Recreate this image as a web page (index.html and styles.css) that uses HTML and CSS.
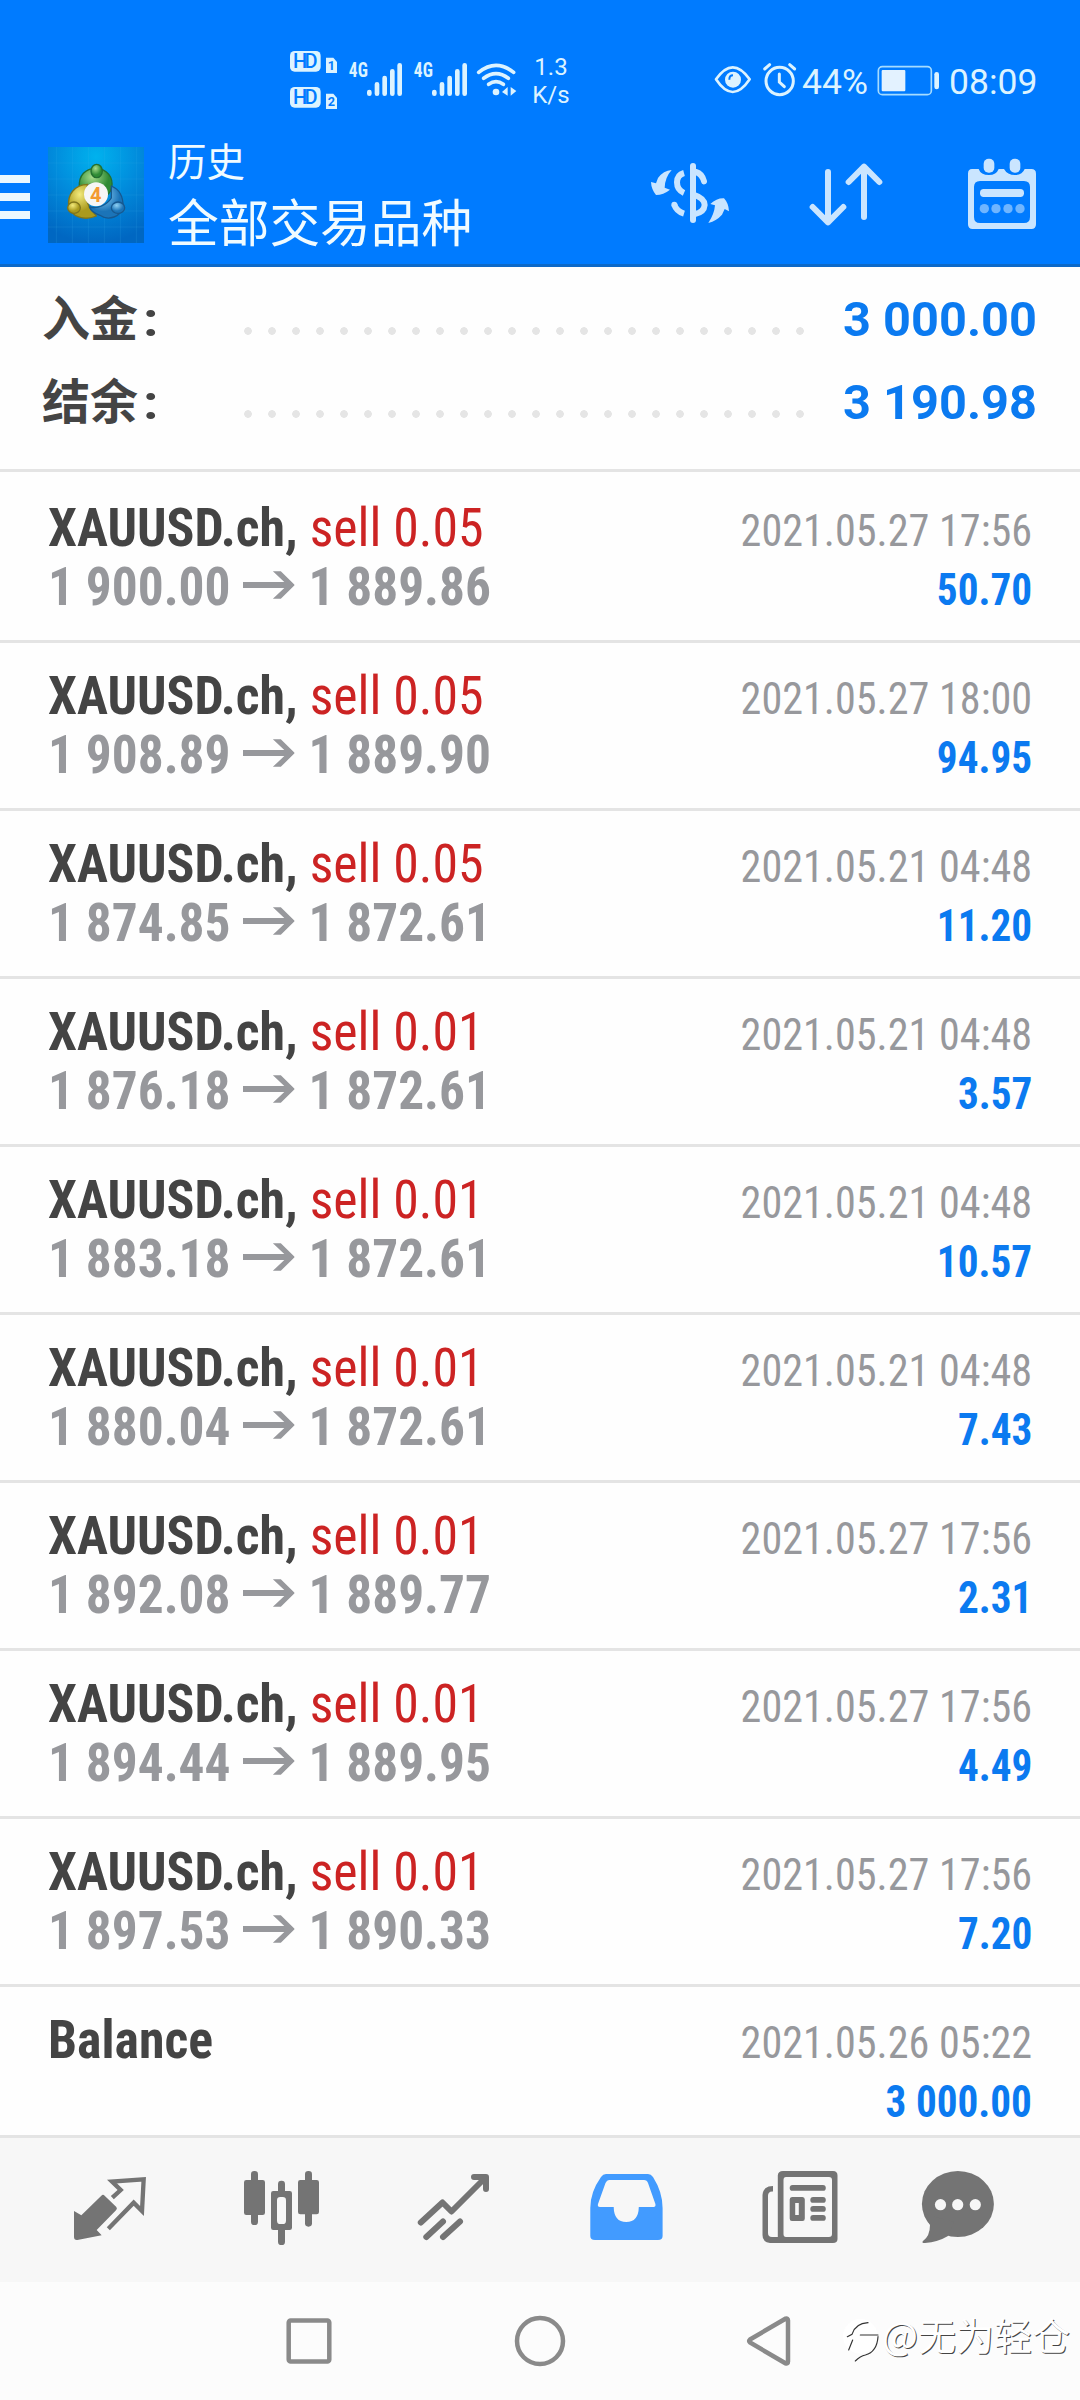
FILE: index.html
```
<!DOCTYPE html>
<html lang="zh-CN">
<head>
<meta charset="utf-8">
<title>历史</title>
<link rel="stylesheet" href="styles.css">
</head>
<body>
<svg class="defs" width="0" height="0"><symbol id="arrow" viewBox="0 0 52 28" preserveAspectRatio="none"><path d="M0 11H41.5L30 0.3H38L52 14L38 27.8H30L41.5 17H0Z" fill="#97989c"/></symbol></svg>
<header class="header">
  <div class="status">
    <svg class="network" width="260" height="90" viewBox="0 0 780 270" fill="#dcf3ff">
      <rect x="60" y="63" width="92" height="62" rx="14"/><rect x="60" y="171" width="92" height="62" rx="14"/>
      <text x="106" y="113" class="hd" textLength="74">HD</text><text x="106" y="221" class="hd" textLength="74">HD</text>
      <path d="M168 83H190L201 96V129H168Z"/><path d="M168 191H190L201 204V237H168Z"/>
      <text x="184" y="121" class="sim">1</text><text x="184" y="229" class="sim">2</text>
      <text x="265" y="142" class="gen" textLength="57" lengthAdjust="spacingAndGlyphs">4G</text><text x="460" y="142" class="gen" textLength="57" lengthAdjust="spacingAndGlyphs">4G</text>
      <g id="bars" stroke="#dcf3ff" stroke-width="14" stroke-linecap="round"><path d="M298 186V191M321 163V191M344 144V191M367 124V191M389 106V191"/></g>
      <use href="#bars" x="195"/>
      <g fill="none" stroke="#dcf3ff" stroke-width="11" stroke-linecap="round"><path d="M626 127Q678 85 731 127M641 145Q678 117 715 145M656 163Q678 147 700 163"/></g>
      <circle cx="678" cy="186" r="10"/><path d="M696 186L713 171V197ZM722 171L739 183L722 197Z"/>
    </svg>
    <div class="speed">1.3<br>K/s</div>
    <svg class="alarm" width="100" height="80" viewBox="0 0 300 240" fill="none" stroke="#dcf3ff">
      <path d="M48 118Q98 46 149 118Q98 194 48 118Z" stroke-width="8" stroke-linejoin="round"/>
      <circle cx="99" cy="119" r="24" fill="#dcf3ff" stroke="none"/><path d="M88 119Q88 106 99 106" stroke="#007bff" stroke-width="6"/>
      <circle cx="239" cy="123" r="41" stroke-width="9"/><path d="M238 102V126L253 140" stroke-width="9" stroke-linecap="round"/>
      <path d="M194 87L209 74M284 87L269 74" stroke-width="9" stroke-linecap="round"/>
    </svg>
    <span class="percent">44%</span>
    <svg class="battery" width="64" height="32" viewBox="0 0 192 96"><rect x="4" y="8" width="159" height="84" rx="12" fill="none" stroke="#a5dcff" stroke-width="5"/><rect x="14" y="18" width="71" height="64" rx="3" fill="#e3f2ff"/><rect x="172" y="24" width="14" height="52" rx="7" fill="#dcf3ff"/></svg>
    <span class="time">08:09</span>
  </div>
  <div class="appbar">
    <div class="menu"><i></i><i></i><i></i></div>
    <svg class="logo" width="96" height="96" viewBox="24 21 288 288">
      <defs>
        <radialGradient id="sky" cx=".5" cy=".1" r=".9"><stop offset="0" stop-color="#00b2ee"/><stop offset=".5" stop-color="#018bdc"/><stop offset="1" stop-color="#0067c2"/></radialGradient>
        <radialGradient id="g" cx=".4" cy=".3"><stop offset="0" stop-color="#a8dc8c"/><stop offset="1" stop-color="#2f8b35"/></radialGradient>
        <radialGradient id="y" cx=".4" cy=".3"><stop offset="0" stop-color="#f3ea7c"/><stop offset="1" stop-color="#aa9a1d"/></radialGradient>
        <radialGradient id="b" cx=".4" cy=".3"><stop offset="0" stop-color="#8fd0f3"/><stop offset="1" stop-color="#1b74b8"/></radialGradient>
      </defs>
      <path d="M24 21H312V309H24Z" fill="url(#sky)"/>
      <path d="M24 69H312M24 117H312M24 165H312M24 213H312M24 261H312M49 21V309M97 21V309M145 21V309M193 21V309M241 21V309M289 21V309" stroke="#3bb0ee" stroke-opacity=".25" stroke-width="2"/>
      <g stroke-width="4" stroke-linejoin="round">
        <path d="M118 143C115 105 137 85 168 85C202 87 221 112 215 143C211 160 200 168 190 172L160 130L140 136Z" fill="url(#g)" stroke="#246f30"/>
        <path d="M143 133C104 134 82 163 86 199C94 229 130 244 169 228L148 202L136 170Z" fill="url(#y)" stroke="#80751b"/>
        <path d="M214 138C238 148 250 170 249 200C244 230 205 244 180 226C163 220 151 210 149 201C173 207 200 196 214 174Z" fill="url(#b)" stroke="#17588f"/>
        <ellipse cx="170" cy="93" rx="17" ry="20" fill="url(#g)" stroke="#246f30"/><ellipse cx="102" cy="203" rx="19" ry="17" fill="url(#y)" stroke="#80751b"/><ellipse cx="234" cy="203" rx="20" ry="17" fill="url(#b)" stroke="#17588f"/>
      </g>
      <circle cx="168" cy="163" r="36" fill="#f6f6f6"/><text x="167" y="185" class="four">4</text>
    </svg>
    <div class="titles"><div class="sub">历史</div><div class="main">全部交易品种</div></div>
    <svg class="symbols" width="120" height="90" viewBox="0 0 360 270" fill="#cae5ff">
      <path d="M95 60Q70 62 54 84L48 100L33 96Q34 118 48 135Q70 135 90 119L74 113Q75 82 95 60Z"/>
      <path d="M205 219Q230 212 246 194L254 177L267 184Q266 160 252 145Q230 144 211 162L225 166Q223 192 205 219Z"/>
      <rect x="150" y="39" width="18" height="180" rx="9"/>
      <g fill="none" stroke="#cae5ff" stroke-width="18"><path d="M132 69Q111 75 111 97Q111 120 132 129M132 191Q109 184 103 164"/><path d="M168 66Q186 71 192 94" stroke-linecap="round"/><path d="M160 134Q194 145 194 165Q192 187 165 192"/></g><circle cx="103" cy="164" r="9"/>
    </svg>
    <svg class="sort" width="90" height="80" viewBox="0 0 270 240" fill="none" stroke="#cae5ff" stroke-width="18" stroke-linecap="round" stroke-linejoin="round"><path d="M84 36V187M38 141L84 187L130 141M192 171V20M146 66L192 20L238 66"/></svg>
    <svg class="calendar" width="80" height="80" viewBox="0 0 240 240" fill="#cae5ff">
      <path fill-rule="evenodd" d="M36 42H56Q62 60 87 60Q109 60 116 42H132Q142 60 165 60Q187 60 194 42H214Q228 42 228 56V208Q228 222 214 222H38Q24 222 24 208V56Q24 42 36 42ZM60 78Q42 78 42 96V186Q42 204 60 204H192Q210 204 210 186V96Q210 78 192 78Z"/>
      <rect x="71" y="11" width="32" height="42" rx="15"/><rect x="149" y="11" width="32" height="42" rx="15"/><rect x="60" y="102" width="132" height="24" rx="11"/>
      <g opacity=".55"><circle cx="73" cy="161" r="14"/><circle cx="108" cy="161" r="14"/><circle cx="144" cy="161" r="14"/><circle cx="180" cy="161" r="14"/></g>
    </svg>
  </div>
</header>
<section class="summary">
  <div class="sumrow"><span class="label">入金<span class="colon">:</span></span><span class="dots"></span><span class="sum">3 000.00</span></div>
  <div class="sumrow"><span class="label">结余<span class="colon">:</span></span><span class="dots"></span><span class="sum">3 190.98</span></div>
</section>
<main class="list">
  <article class="deal"><div class="line"><span class="name">XAUUSD.ch, <em>sell 0.05</em></span><time class="date">2021.05.27 17:56</time></div><div class="line"><span class="prices">1 900.00<svg class="to"><use href="#arrow"/></svg>1 889.86</span><b class="profit">50.70</b></div></article>
  <article class="deal"><div class="line"><span class="name">XAUUSD.ch, <em>sell 0.05</em></span><time class="date">2021.05.27 18:00</time></div><div class="line"><span class="prices">1 908.89<svg class="to"><use href="#arrow"/></svg>1 889.90</span><b class="profit">94.95</b></div></article>
  <article class="deal"><div class="line"><span class="name">XAUUSD.ch, <em>sell 0.05</em></span><time class="date">2021.05.21 04:48</time></div><div class="line"><span class="prices">1 874.85<svg class="to"><use href="#arrow"/></svg>1 872.61</span><b class="profit">11.20</b></div></article>
  <article class="deal"><div class="line"><span class="name">XAUUSD.ch, <em>sell 0.01</em></span><time class="date">2021.05.21 04:48</time></div><div class="line"><span class="prices">1 876.18<svg class="to"><use href="#arrow"/></svg>1 872.61</span><b class="profit">3.57</b></div></article>
  <article class="deal"><div class="line"><span class="name">XAUUSD.ch, <em>sell 0.01</em></span><time class="date">2021.05.21 04:48</time></div><div class="line"><span class="prices">1 883.18<svg class="to"><use href="#arrow"/></svg>1 872.61</span><b class="profit">10.57</b></div></article>
  <article class="deal"><div class="line"><span class="name">XAUUSD.ch, <em>sell 0.01</em></span><time class="date">2021.05.21 04:48</time></div><div class="line"><span class="prices">1 880.04<svg class="to"><use href="#arrow"/></svg>1 872.61</span><b class="profit">7.43</b></div></article>
  <article class="deal"><div class="line"><span class="name">XAUUSD.ch, <em>sell 0.01</em></span><time class="date">2021.05.27 17:56</time></div><div class="line"><span class="prices">1 892.08<svg class="to"><use href="#arrow"/></svg>1 889.77</span><b class="profit">2.31</b></div></article>
  <article class="deal"><div class="line"><span class="name">XAUUSD.ch, <em>sell 0.01</em></span><time class="date">2021.05.27 17:56</time></div><div class="line"><span class="prices">1 894.44<svg class="to"><use href="#arrow"/></svg>1 889.95</span><b class="profit">4.49</b></div></article>
  <article class="deal"><div class="line"><span class="name">XAUUSD.ch, <em>sell 0.01</em></span><time class="date">2021.05.27 17:56</time></div><div class="line"><span class="prices">1 897.53<svg class="to"><use href="#arrow"/></svg>1 890.33</span><b class="profit">7.20</b></div></article>
  <article class="deal last"><div class="line"><span class="name">Balance</span><time class="date">2021.05.26 05:22</time></div><div class="line single"><b class="profit">3 000.00</b></div></article>
</main>
<nav class="tabs">
  <svg viewBox="-30 0 360 300" fill="#747474"><path d="M42 153L64 166L124 107Q129 102 134 107L169 141Q173 146 168 151L110 210L125 226L52 240Q42 241 42 231Z"/><path d="M157 113L182 90L156 65L251 58L246 153L221 128L145 206" fill="none" stroke="#747474" stroke-width="13"/></svg>
  <svg viewBox="486 0 360 300" fill="#747474"><rect x="552" y="60" width="63" height="105" rx="7"/><rect x="573" y="33" width="21" height="162" rx="10"/><rect x="714" y="60" width="63" height="103" rx="7"/><rect x="735" y="33" width="21" height="167" rx="10"/><rect x="654" y="62" width="21" height="193" rx="10"/><rect x="633" y="93" width="63" height="117" rx="7"/><rect x="651" y="111" width="27" height="81" rx="10" fill="#f7f7f7"/></svg>
  <svg viewBox="0 0 120 100" fill="none" stroke="#747474" stroke-width="6" stroke-linecap="round" stroke-linejoin="round"><path d="M26.800 62.500L48.500 42.500L57.500 51.500L91 18M80 17H92V29M32.300 77L49 61.500M49 77L66 61.500"/></svg>
  <svg viewBox="0 0 120 100" fill="#429bff"><path fill-rule="evenodd" d="M40 14H82Q85 14 87 17Q96.600 32 96.600 48V76Q96.600 80 92 80H29Q24.300 80 24.300 76V48Q24.300 32 35 17Q37 14 40 14ZM43 20Q41 20 39.500 23L32 44Q31.200 47 34 47H47.700Q48 62 60.200 62Q72.500 62 72.800 47H87.500Q90 47 89.400 44L82 23Q81 20 78 20Z"/></svg>
  <svg viewBox="0 0 120 100" fill="#747474"><path fill-rule="evenodd" d="M45 11H95Q99.500 11 99.500 15.500V79Q99.500 83 95 83H32Q24.500 82 24.500 75V35Q25 26 35 26V31.500Q30 31 30 36V73Q30 77 34 77H39.800V15.500Q40 11 45 11ZM48 17Q45.500 17 45.500 20V74Q45.500 77 48 77H91Q94 77 94 74V20Q94 17 91 17Z"/><rect x="51.700" y="25" width="36.100" height="5.800" rx="2.900"/><path fill-rule="evenodd" d="M54 37H64.500Q66.800 37 66.800 39.500V58.500Q66.800 61 64.500 61H54Q51.700 61 51.700 58.500V39.500Q51.700 37 54 37ZM57.200 43V55H60.800V43Z"/><rect x="72.300" y="37" width="15.500" height="5.800" rx="2.900"/><rect x="72.300" y="46" width="15.500" height="5.800" rx="2.900"/><rect x="72.300" y="55" width="15.500" height="5.800" rx="2.900"/></svg>
  <svg viewBox="0 0 120 100" fill="#747474"><ellipse cx="47.900" cy="44" rx="36" ry="33"/><path d="M14 54Q18 60 20 65Q20 76 13 81Q11 83 15 83Q28 82 38 76L44 62Z"/><g fill="#f7f7f7"><circle cx="30.500" cy="44.700" r="5.600"/><circle cx="47.700" cy="44.700" r="5.600"/><circle cx="65.300" cy="44.700" r="5.600"/></g></svg>
</nav>
<footer class="sysnav">
  <svg width="60" height="60" viewBox="0 0 60 60"><rect x="9.700" y="9.500" width="40.600" height="41" rx="2"/></svg>
  <svg width="60" height="60" viewBox="0 0 60 60"><circle cx="31" cy="30" r="23"/></svg>
  <svg width="60" height="60" viewBox="0 0 60 60"><path d="M11 28.500L46.500 7.700Q49 7 49 9.500V50.500Q49 53 46.500 52.300L11 31.500Q9.500 30 11 28.500Z"/></svg>
  <div class="mark">
    <svg width="40" height="50" viewBox="20 20 120 150" fill="none" stroke-linecap="round"><circle cx="75" cy="84" r="52" fill="#fff"/><path d="M36 85L50 78Q60 45 98 43M52 95L40 125M75 80H128M128 85Q125 130 90 140Q75 143 60 158" stroke="#333" stroke-width="3.500"/></svg>
    <span>@无为轻仓</span>
  </div>
</footer>
</body>
</html>
```
FILE: styles.css
```
* { box-sizing: border-box; }
body { margin: 0; width: 1080px; height: 2400px; overflow: hidden; background: #fefefe; font-family: Roboto, "Noto Sans CJK SC", sans-serif; }
svg { display: block; flex: none; }
.defs { position: absolute; }
.header { height: 267px; background: #007bff; border-bottom: 3px solid #0d69c8; color: #dcf3ff; }
.status { display: flex; height: 120px; padding-top: 30px; }
.network { margin-left: 270px; }
.hd { font: 500 60px Roboto, sans-serif; text-anchor: middle; fill: #007bff; }
.sim { font: 700 38px Roboto, sans-serif; text-anchor: middle; fill: #007bff; }
.gen { font: 700 60px "Roboto Condensed", Roboto, sans-serif; text-anchor: middle; }
.speed { width: 44px; margin: 24px 0 0 -1px; font-size: 24px; line-height: 27.5px; text-align: center; }
.alarm { margin: 10px 0 0 127px; }
.percent { width: 74px; margin: 32px 0 0 2px; font-size: 35.5px; line-height: 40px; }
.battery { margin: 34px 0 0 1px; }
.time { margin: 32px 0 0 8px; font-size: 35.5px; line-height: 40px; }
.appbar { display: flex; height: 144px; }
.menu { display: flex; flex-direction: column; gap: 10px; width: 48px; padding-top: 55px; }
.menu i { width: 30px; height: 8px; background: #ebf8ff; }
.logo { margin-top: 27px; }
.four { font: 700 60px Roboto, sans-serif; text-anchor: middle; fill: #f39a32; }
.titles { width: 496px; padding: 20px 0 0 24px; color: #f0fbff; }
.sub { font-size: 38.500px; line-height: 46px; }
.main { font-size: 50.700px; line-height: 78px; }
.symbols { margin-top: 30px; }
.sort { margin: 40px 0 0 40px; }
.calendar { margin: 35px 0 0 70px; }
.summary { height: 205px; padding: 11px 43px 0 42px; border-bottom: 3px solid #e4e4e4; }
.sumrow { display: flex; align-items: center; height: 83px; }
.label { width: 202px; font-size: 48px; line-height: 83px; font-weight: 700; color: #444; }
.colon { display: inline-block; margin-left: 6px; transform: scaleX(1.150); }
.dots { width: 560px; height: 8px; margin-top: 22px; background: radial-gradient(circle at 4px 4px, #e5e5e5 3.500px, transparent 4.100px) 0 0 / 24px 8px repeat-x; }
.sum { flex: 1; text-align: right; white-space: nowrap; font-size: 48px; font-weight: 700; color: #0b7af0; transform: scaleX(1.015); transform-origin: right; }
.deal { height: 168px; padding: 23px 48px 0; border-top: 3px solid #e4e4e4; font-family: "Roboto Condensed", Roboto, sans-serif; white-space: nowrap; }
.deal:first-child { border-top-color: transparent; }
.deal.last { height: 151px; overflow: hidden; }
.line { display: flex; justify-content: space-between; align-items: baseline; height: 59px; line-height: 59px; }
.line.single { justify-content: flex-end; padding-top: 3px; }
.name, .prices { font-size: 54px; font-weight: 700; transform: scaleX(.959); transform-origin: left; }
.prices { transform: scaleX(.951); }
.name { color: #444; }
.name em { font-style: normal; font-weight: 400; color: #cc2323; }
.prices { color: #97989c; }
.to { display: inline-block; width: 54.500px; height: 28px; margin: 0 14px 0 13.500px; vertical-align: 6px; }
.date { font-size: 45px; color: #97989c; transform: scaleX(.937); transform-origin: right; }
.profit { font-size: 45px; color: #0b7af0; transform: scaleX(.915); transform-origin: right; }
.tabs { display: flex; height: 147px; padding: 22px 24px 0 50px; gap: 52px; border-top: 3px solid #e4e4e4; background: #f7f7f7; }
.tabs svg { width: 120px; height: 100px; }
.sysnav { position: relative; display: flex; height: 118px; padding: 29px 0 0 279px; gap: 170px; background: #fcfcfc; }
.sysnav > svg { fill: none; stroke: #8a8a8a; stroke-width: 4.500; }
.mark { position: absolute; left: 842px; top: 33px; display: flex; }
.mark span { margin-top: -2px; font: 38px/42px "Noto Sans CJK SC", sans-serif; color: #fff; text-shadow: 1px 1px 0 #444; white-space: nowrap; }
```
